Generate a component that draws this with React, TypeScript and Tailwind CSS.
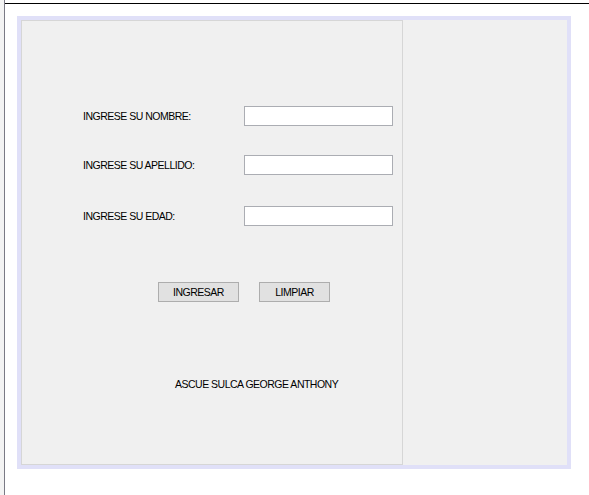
import React from "react";

const font = { fontFamily: '"Liberation Sans", Arial, sans-serif' };

function Row({ label, mt }: { label: string; mt: string }) {
  return (
    <div className={`flex items-center h-[20px] ${mt}`}>
      <div className="w-[161px] ml-[61px] text-[10.5px] tracking-[-0.5px] text-black leading-[13px]">{label}</div>
      <input className="w-[149px] h-[20px] bg-white border border-[#abadb3] outline-none" />
    </div>
  );
}

export default function App() {
  return (
    <div className="w-[589px] h-[495px] bg-white flex overflow-hidden" style={font}>
      <div className="w-[4px] h-full bg-[#f3f3f3]" />
      <div className="flex-1 h-full border-l border-[#7a7a85] bg-white">
        <div className="mt-[3px] h-px bg-black" />
        <div className="ml-[12px] mt-[12px] w-[554px] h-[453px] border-[4px] border-[#e0e0f8] flex">
          <div className="w-[382px] h-full bg-[#f0f0f0] border border-[#d6d6d6] flex flex-col">
            <Row label="INGRESE SU NOMBRE:" mt="mt-[85px]" />
            <Row label="INGRESE SU APELLIDO:" mt="mt-[29px]" />
            <Row label="INGRESE SU EDAD:" mt="mt-[31px]" />
            <div className="flex mt-[56px] ml-[136px] gap-[20px]">
              <button className="w-[81px] h-[20px] bg-[#e1e1e1] border border-[#adadad] text-[10.5px] tracking-[-0.5px] text-black leading-none">INGRESAR</button>
              <button className="w-[71px] h-[20px] bg-[#e1e1e1] border border-[#adadad] text-[10.5px] tracking-[-0.5px] text-black leading-none">LIMPIAR</button>
            </div>
            <div className="mt-[76px] ml-[153px] text-[10.5px] tracking-[-0.5px] text-black leading-[13px]">ASCUE SULCA GEORGE ANTHONY</div>
          </div>
          <div className="flex-1 h-full bg-[#f0f0f0]" />
        </div>
      </div>
    </div>
  );
}
